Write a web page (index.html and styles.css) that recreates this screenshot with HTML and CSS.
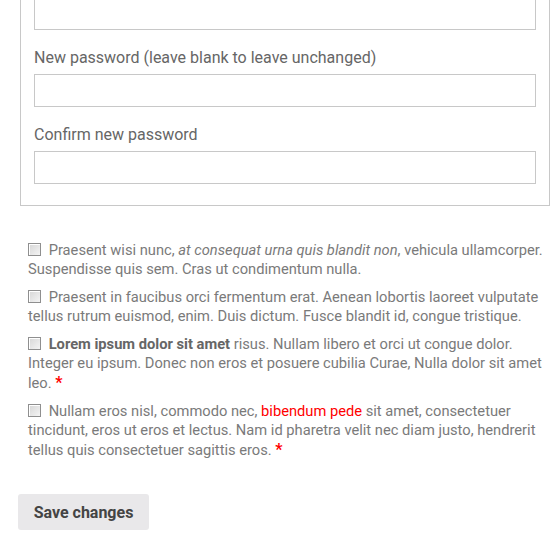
FILE: index.html
```html
<!DOCTYPE html>
<html>
<head>
<meta charset="utf-8">
<link rel="stylesheet" href="styles.css">
</head>
<body>
<div class="page">
  <fieldset class="box">
    <div class="field">
      <label class="lbl">Current password</label>
      <input class="inp" type="password">
    </div>
    <div class="field">
      <label class="lbl">New password (leave blank to leave unchanged)</label>
      <input class="inp" type="password">
    </div>
    <div class="field">
      <label class="lbl">Confirm new password</label>
      <input class="inp" type="password">
    </div>
  </fieldset>

  <div class="checks">
    <p class="chk"><input type="checkbox" class="cb"> Praesent wisi nunc, <em>at consequat urna quis blandit non</em>, vehicula ullamcorper. Suspendisse quis sem. Cras ut condimentum nulla.</p>
    <p class="chk"><input type="checkbox" class="cb"> Praesent in faucibus orci fermentum erat. Aenean lobortis laoreet vulputate tellus rutrum euismod, enim. Duis dictum. Fusce blandit id, congue tristique.</p>
    <p class="chk"><input type="checkbox" class="cb"> <strong>Lorem ipsum dolor sit amet</strong> risus. Nullam libero et orci ut congue dolor. Integer eu ipsum. Donec non eros et posuere cubilia Curae, Nulla dolor sit amet leo. <span class="req">*</span></p>
    <p class="chk"><input type="checkbox" class="cb"> Nullam eros nisl, commodo nec, <span class="red">bibendum pede</span> sit amet, consectetuer tincidunt, eros ut eros et lectus. Nam id pharetra velit nec diam justo, hendrerit tellus quis consectetuer sagittis eros. <span class="req">*</span></p>
  </div>

  <div class="actions">
    <button class="btn" type="button">Save changes</button>
  </div>
</div>
</body>
</html>
```

FILE: styles.css
```css
html, body {
  margin: 0;
  padding: 0;
  background: #fff;
}
body {
  font-family: Roboto, "Liberation Sans", Arial, sans-serif;
}
.page {
  padding: 0 4px 0 20px;
  margin-top: -48px;
}
.box {
  margin: 0;
  border: 1px solid #c8c8c8;
  padding: 0 13px 21px 13px;
  width: 530px;
  box-sizing: border-box;
  min-width: 0;
}
.field {
  display: flex;
  flex-direction: column;
  margin-top: 16px;
}
.lbl {
  font-size: 16px;
  line-height: 24px;
  color: #666;
  margin-bottom: 4px;
}
.inp {
  height: 33px;
  box-sizing: border-box;
  border: 1px solid #c8c8c8;
  background: #fff;
  margin: 0;
  width: 100%;
}
.checks {
  padding: 35px 0 0 8px;
}
.chk {
  margin: 0 0 9px 0;
  font-size: 14.7px;
  line-height: 19px;
  color: #7a7a7a;
}
.chk strong {
  color: #666;
}
.cb {
  -webkit-appearance: none;
  appearance: none;
  width: 13px;
  height: 13px;
  margin: 0 4px 0 0;
  box-sizing: border-box;
  border: 1px solid #8f8f8f;
  background: linear-gradient(135deg, #d6d6d6, #f4f4f4);
  box-shadow: inset 1px 1px 0 #fff;
  vertical-align: -1px;
}
.red, .req {
  color: #f00;
}
.req {
  font-weight: bold;
  font-size: 16px;
}
.actions {
  padding: 25px 0 0 0;
  margin-left: -2px;
}
.btn {
  font-family: Roboto, "Liberation Sans", Arial, sans-serif;
  font-size: 16px;
  font-weight: bold;
  color: #444;
  background: #e9e8ea;
  border: none;
  border-radius: 3px;
  width: 131px;
  height: 36px;
  padding: 0;
}
```
